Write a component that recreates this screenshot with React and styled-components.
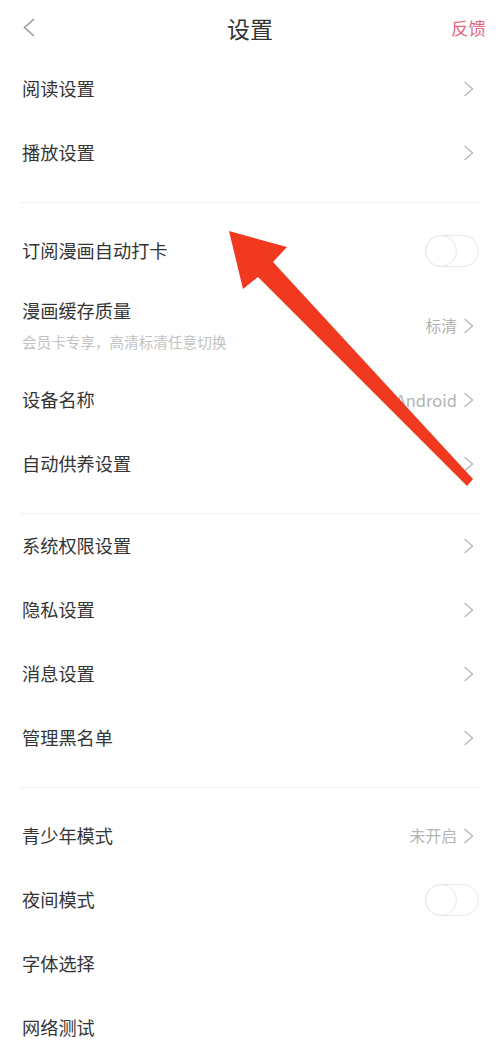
import React from 'react';
import styled, { createGlobalStyle } from 'styled-components';

const GlobalStyle = createGlobalStyle`
  html, body {
    margin: 0;
    padding: 0;
    background: #ffffff;
  }
  body {
    font-family: "Noto Sans CJK SC", "Noto Sans", sans-serif;
    -webkit-font-smoothing: antialiased;
  }
`;

const Page = styled.div`
  position: relative;
  width: 500px;
  min-height: 1050px;
  background: #ffffff;
  overflow: hidden;
`;

const Header = styled.div`
  height: 57px;
  display: grid;
  grid-template-columns: 80px 1fr 80px;
  align-items: center;
  padding: 0 14px;
  box-sizing: border-box;
`;

const BackButton = styled.div`
  display: flex;
  margin-left: 9px;
  margin-top: -3px;
`;

const Title = styled.div`
  text-align: center;
  font-size: 23px;
  color: #333333;
  line-height: 1;
  margin-top: -1px;
`;

const Feedback = styled.div`
  justify-self: end;
  font-size: 17.5px;
  color: #e2687e;
  line-height: 1;
  margin-top: -1px;
`;

const Row = styled.div`
  height: ${({ height }) => height || '64px'};
  display: flex;
  align-items: center;
  justify-content: space-between;
  padding: 0 26px 0 22px;
  box-sizing: border-box;
`;

const Labels = styled.div`
  display: flex;
  flex-direction: column;
  gap: ${({ gap }) => gap || '0px'};
`;

const Label = styled.div`
  font-size: 18.2px;
  color: #353535;
  line-height: 1.2;
`;

const SubLabel = styled.div`
  font-size: 14.6px;
  color: #c2c2c2;
  line-height: 1.2;
`;

const Right = styled.div`
  display: flex;
  align-items: center;
  gap: 6px;
`;

const Value = styled.span`
  font-size: ${({ size }) => size || '15.8px'};
  color: #b4b4b4;
  line-height: 1;
`;

const Toggle = styled.div`
  position: relative;
  width: 54px;
  height: 32px;
  margin-right: -5px;
  border: 1.5px solid #e8e8e8;
  border-radius: 16px;
  box-sizing: border-box;
  background: #ffffff;
  &::after {
    content: '';
    position: absolute;
    left: -1.5px;
    top: -1.5px;
    width: 32px;
    height: 32px;
    border-radius: 50%;
    border: 1.5px solid #e8e8e8;
    box-sizing: border-box;
  }
`;

const Divider = styled.div`
  padding: 17px 20px ${({ tight }) => (tight ? '0px' : '16px')};
  &::after {
    content: '';
    display: block;
    height: 1px;
    background: #f1f1f1;
  }
`;

const ArrowLayer = styled.svg`
  position: absolute;
  left: 0;
  top: 0;
  pointer-events: none;
`;

const Chevron = () => (
  <svg width="11" height="16" viewBox="0 0 11 16">
    <polyline points="1.5,1 9.5,8 1.5,15" fill="none" stroke="#bcbcbc" strokeWidth="1.5" />
  </svg>
);

const BackIcon = () => (
  <svg width="12" height="19" viewBox="0 0 12 19">
    <polyline points="11,1 1.5,9.5 11,18" fill="none" stroke="#9a9a9a" strokeWidth="1.6" />
  </svg>
);

const NavRow = ({ label, value, valueSize }) => (
  <Row>
    <Label>{label}</Label>
    <Right>
      {value && <Value size={valueSize}>{value}</Value>}
      <Chevron />
    </Right>
  </Row>
);

const SwitchRow = ({ label }) => (
  <Row>
    <Label>{label}</Label>
    <Toggle />
  </Row>
);

const PlainRow = ({ label }) => (
  <Row>
    <Label>{label}</Label>
  </Row>
);

export default function App() {
  return (
    <Page>
      <GlobalStyle />
      <Header>
        <BackButton>
          <BackIcon />
        </BackButton>
        <Title>设置</Title>
        <Feedback>反馈</Feedback>
      </Header>

      <NavRow label="阅读设置" />
      <NavRow label="播放设置" />
      <Divider />

      <SwitchRow label="订阅漫画自动打卡" />
      <Row height="85px">
        <Labels gap="11px">
          <Label>漫画缓存质量</Label>
          <SubLabel>会员卡专享，高清标清任意切换</SubLabel>
        </Labels>
        <Right>
          <Value>标清</Value>
          <Chevron />
        </Right>
      </Row>
      <NavRow label="设备名称" value="Android" valueSize="16.5px" />
      <NavRow label="自动供养设置" />
      <Divider tight />

      <NavRow label="系统权限设置" />
      <NavRow label="隐私设置" />
      <NavRow label="消息设置" />
      <NavRow label="管理黑名单" />
      <Divider />

      <NavRow label="青少年模式" value="未开启" />
      <SwitchRow label="夜间模式" />
      <PlainRow label="字体选择" />
      <PlainRow label="网络测试" />

      <ArrowLayer width="500" height="1050" viewBox="0 0 500 1050">
        <polygon
          points="229,231 287,247 273,262 473,479 467,486 258,277 243,289"
          fill="#f0391f"
        />
      </ArrowLayer>
    </Page>
  );
}
